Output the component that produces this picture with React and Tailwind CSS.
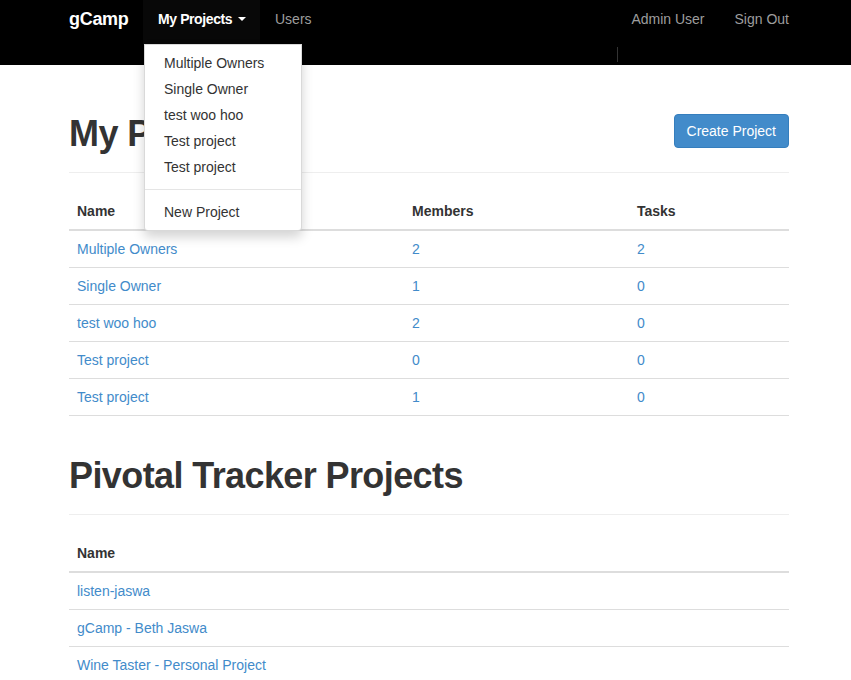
import React from "react";

const myProjects = [
  { name: "Multiple Owners", members: 2, tasks: 2 },
  { name: "Single Owner", members: 1, tasks: 0 },
  { name: "test woo hoo", members: 2, tasks: 0 },
  { name: "Test project", members: 0, tasks: 0 },
  { name: "Test project", members: 1, tasks: 0 },
];

const trackerProjects = ["listen-jaswa", "gCamp - Beth Jaswa", "Wine Taster - Personal Project"];

function Navbar() {
  return (
    <nav className="h-[65px] bg-black">
      <div className="ml-[69px] w-[720px] flex items-start relative">
        <a className="w-[74px] shrink-0 text-[18px] font-bold tracking-[-0.3px] text-white leading-[20px] pt-[9px]">gCamp</a>
        <div className="relative shrink-0">
          <a className="flex items-center whitespace-nowrap w-[117px] h-[45px] pl-[15px] bg-[#080808] text-white font-bold tracking-[-0.4px] text-[14px] leading-[20px] pb-[7px]">
            My Projects
            <span className="ml-[6px] w-0 h-0 border-x-[4px] border-x-transparent border-t-[4px] border-t-white" />
          </a>
          <div className="absolute left-[1px] top-[44px] w-[158px] bg-white border border-black/15 rounded-b-[4px] shadow-[0_6px_12px_rgba(0,0,0,0.175)] py-[5px] z-10">
            {myProjects.map((p, i) => (
              <a key={i} className="block px-[19px] leading-[20px] py-[3px] text-[#333]">{p.name}</a>
            ))}
            <div className="h-px bg-[#e5e5e5] my-[9px]" />
            <a className="block px-[19px] leading-[20px] py-[3px] text-[#333]">New Project</a>
          </div>
        </div>
        <a className="px-[15px] leading-[20px] pt-[9px] text-[#9d9d9d]">Users</a>
        <div className="ml-auto flex -mr-[15px] relative">
          <a className="px-[15px] leading-[20px] pt-[9px] text-[#9d9d9d]">Admin User</a>
          <a className="px-[15px] leading-[20px] pt-[9px] text-[#9d9d9d]">Sign Out</a>
          <span className="absolute left-[1px] top-[47px] w-px h-[15px] bg-[#333]" />
        </div>
      </div>
    </nav>
  );
}

function PageHeader({ title, children, className }) {
  return (
    <div className={"flex items-start justify-between border-b border-[#eee] pb-[8px] " + className}>
      <h1 className="text-[36px] leading-[40px] font-bold tracking-[-0.6px] text-[#333] mb-[10px]">{title}</h1>
      {children}
    </div>
  );
}

export default function App() {
  return (
    <div className="min-h-[680px] bg-white text-[14px] text-[#333]" style={{ fontFamily: '"Liberation Sans", Arial, sans-serif' }}>
      <Navbar />
      <div className="ml-[69px] w-[720px]">
        <PageHeader title="My Projects" className="mt-[49px]">
          <button className="h-[34px] px-[12px] bg-[#428bca] border border-[#357ebd] rounded-[4px] text-white text-[14px] leading-[20px]">
            Create Project
          </button>
        </PageHeader>
        <table className="w-full mt-[20px] border-collapse">
          <thead>
            <tr className="border-b-2 border-[#ddd]">
              <th className="w-[335px] text-left font-bold p-[8px] leading-[20px]">Name</th>
              <th className="w-[225px] text-left font-bold p-[8px] leading-[20px]">Members</th>
              <th className="text-left font-bold p-[8px] leading-[20px]">Tasks</th>
            </tr>
          </thead>
          <tbody>
            {myProjects.map((p, i) => (
              <tr key={i} className="border-b border-[#ddd]">
                <td className="p-[8px] leading-[20px] text-[#428bca]">{p.name}</td>
                <td className="p-[8px] leading-[20px] text-[#428bca]">{p.members}</td>
                <td className="p-[8px] leading-[20px] text-[#428bca]">{p.tasks}</td>
              </tr>
            ))}
          </tbody>
        </table>
        <PageHeader title="Pivotal Tracker Projects" className="mt-[40px]" />
        <table className="w-full mt-[20px] border-collapse">
          <thead>
            <tr className="border-b-2 border-[#ddd]">
              <th className="text-left font-bold p-[8px] leading-[20px]">Name</th>
            </tr>
          </thead>
          <tbody>
            {trackerProjects.map((p, i) => (
              <tr key={i} className="border-b border-[#ddd]">
                <td className="p-[8px] leading-[20px] text-[#428bca]">{p}</td>
              </tr>
            ))}
          </tbody>
        </table>
      </div>
    </div>
  );
}
